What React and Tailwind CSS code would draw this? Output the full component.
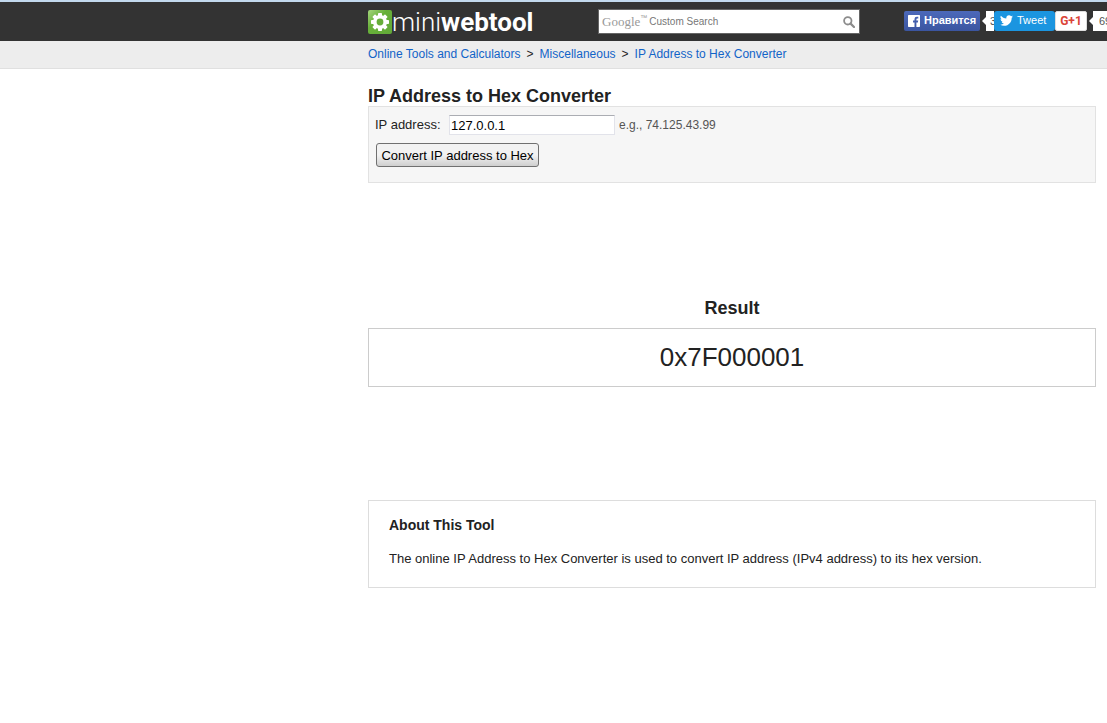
function GearLogo() {
  return (
    <svg viewBox="0 0 24 24" className="h-6 w-6 shrink-0" aria-hidden="true">
      <defs>
        <linearGradient id="leaf" x1="0" y1="0" x2="1" y2="1">
          <stop offset="0" stopColor="#a5d67d" />
          <stop offset="0.4" stopColor="#68b03a" />
          <stop offset="1" stopColor="#62a938" />
        </linearGradient>
      </defs>
      <rect width="24" height="24" rx="2" fill="url(#leaf)" />
      <g fill="#fff">
        <circle cx="12" cy="12" r="7" />
        {[0, 45, 90, 135].map((a) => (
          <rect key={a} x="10" y="3" width="4" height="18" rx="0.8" transform={`rotate(${a} 12 12)`} />
        ))}
      </g>
      <circle cx="12" cy="12" r="3.4" fill="#66ae3a" />
    </svg>
  );
}

function SearchBox() {
  return (
    <form className="relative ml-[66px] h-[25px] w-[262px] shrink-0 border border-[#666] bg-white" onSubmit={(e) => e.preventDefault()}>
      <input type="text" aria-label="Google Custom Search" className="h-full w-full bg-transparent px-1 text-[13px] outline-none" />
      <span className="pointer-events-none absolute inset-y-0 left-[3px] flex items-center text-[#999]">
        <span className="font-['Liberation_Serif',serif] text-[13px] leading-4">Google</span>
        <span className="mb-2 text-[7px] leading-none">™</span>
        <span className="ml-[2px] text-[10px] leading-4 text-[#777]">Custom Search</span>
      </span>
      <button type="submit" aria-label="Search" className="absolute inset-y-0 right-1 flex items-center">
        <svg viewBox="0 0 12 12" className="h-3 w-3" fill="none" stroke="#8c8c8c">
          <circle cx="4.800" cy="4.800" r="3.700" strokeWidth="1.800" />
          <path d="M7.600 7.600 11 11" strokeWidth="2.200" strokeLinecap="round" />
        </svg>
      </button>
    </form>
  );
}

function Arrow() {
  return (
    <svg viewBox="0 0 4 8" className="h-2 w-1 shrink-0" aria-hidden="true">
      <path d="M4 0v8L0 4z" fill="#fff" />
    </svg>
  );
}

function Social() {
  return (
    <div className="ml-11 flex h-[37px] shrink-0 items-center self-start">
      <button className="flex h-5 w-[76px] items-center gap-1 rounded-[2px] bg-linear-to-b from-[#4c69ba] to-[#3b55a0] pl-1 text-[11px] font-bold text-white">
        <svg viewBox="0 0 12 12" className="h-3 w-3 shrink-0" aria-hidden="true">
          <path fill="#fff" d="M.7 0h10.6q.7 0 .7.7v10.6q0 .7-.7.7H8.4V7.4h1.5l.3-1.9H8.4V4.4q0-.9.9-.9h1V1.8H8.8Q6.500 1.800 6.500 4v1.500H5v1.900h1.500V12H.7Q0 12 0 11.300V.7Q0 0 .7 0z" />
        </svg>
        Нравится
      </button>
      <span className="flex w-[14px] items-center overflow-hidden pl-[2px]">
        <Arrow />
        <span className="h-5 w-10 shrink-0 bg-white pl-1 text-[11px] leading-5 text-[#555]">3</span>
      </span>
      <button className="flex h-5 w-[61px] items-center gap-1 rounded-[3px] bg-[#1b95e0] pl-[6px] text-[11px] text-white">
        <svg viewBox="0 0 24 24" className="h-[13px] w-[13px] shrink-0" aria-hidden="true">
          <path fill="#fff" d="M23.950 4.570a10 10 0 0 1-2.820.770 4.960 4.960 0 0 0 2.160-2.720 9.900 9.900 0 0 1-3.120 1.190 4.920 4.920 0 0 0-8.390 4.480C7.690 8.090 4.070 6.130 1.640 3.160a4.920 4.920 0 0 0 1.520 6.570 4.900 4.900 0 0 1-2.230-.610v.060a4.920 4.920 0 0 0 3.950 4.820 5 5 0 0 1-2.210.090 4.940 4.940 0 0 0 4.600 3.420A9.870 9.870 0 0 1 0 19.540a13.990 13.990 0 0 0 7.550 2.210c9.050 0 14-7.500 14-13.980 0-.210 0-.420-.020-.630a9.940 9.940 0 0 0 2.460-2.550z" />
        </svg>
        Tweet
      </button>
      <button className="h-5 w-8 rounded-[2px] border border-[#ddd] bg-white text-center font-['Roboto',sans-serif] text-[12px] leading-[18px] font-bold text-[#db4437]">
        G+1
      </button>
      <span className="flex items-center pl-[2px]">
        <Arrow />
        <span className="h-5 w-10 shrink-0 bg-white pl-[6px] text-[11px] leading-5 text-[#555]">69</span>
      </span>
    </div>
  );
}

export default function App() {
  return (
    <div className="min-h-screen overflow-hidden bg-white font-['Liberation_Sans',Arial,sans-serif] text-[13px] text-[#222]">
      <header className="border-t-2 border-[#c3d9ee] bg-[#333]">
        <div className="ml-auto flex h-[39px] w-[739px] items-center">
          <a href="#" className="flex w-[164px] shrink-0 items-center font-['Roboto',sans-serif] text-[26px] leading-7 text-white" aria-label="miniwebtool">
            <GearLogo />
            <span className="font-light">mini</span>
            <span className="font-bold">webtool</span>
          </a>
          <SearchBox />
          <Social />
        </div>
      </header>
      <nav className="border-b border-[#e0e0e0] bg-[#ededed]" aria-label="Breadcrumb">
        <div className="ml-auto flex h-[27px] w-[739px] gap-[6px] text-[12px] leading-[26px]">
          <a href="#" className="text-[#1264c8]">Online Tools and Calculators</a>
          <span>&gt;</span>
          <a href="#" className="text-[#1264c8]">Miscellaneous</a>
          <span>&gt;</span>
          <a href="#" className="text-[#1264c8]">IP Address to Hex Converter</a>
        </div>
      </nav>
      <main className="mr-[11px] ml-auto w-[728px] pt-[17px]">
        <h1 className="text-[18px] leading-5 font-bold">IP Address to Hex Converter</h1>
        <form className="h-[77px] border border-[#e2e2e2] bg-[#f6f6f6] px-[6px] pt-[7px]" onSubmit={(e) => e.preventDefault()}>
          <div className="flex items-center">
            <label htmlFor="ip" className="w-[74px] leading-[22px]">IP address:</label>
            <input id="ip" type="text" defaultValue="127.0.0.1" className="h-5 w-[166px] border border-[#e2e3ea] border-t-[#abadb3] bg-white px-[1px] text-[13px] text-black" />
            <span className="ml-1 text-[12px] leading-[22px] text-[#555]">e.g., 74.125.43.99</span>
          </div>
          <button type="submit" className="mt-[7px] ml-px h-6 w-[163px] rounded-[3px] border border-[#707070] bg-linear-to-b from-[#f2f2f2] from-50% to-[#cfcfcf] pt-px text-[13px] whitespace-nowrap text-black">
            Convert IP address to Hex
          </button>
        </form>
        <section>
          <h2 className="mt-[114px] text-center text-[18px] leading-[22px] font-bold">Result</h2>
          <div className="mt-[9px] border border-[#ccc] text-center text-[26px] leading-[57px]">0x7F000001</div>
        </section>
        <section className="mt-[113px] h-[88px] border border-[#ddd] px-5 pt-4">
          <h2 className="text-[14px] leading-4 font-bold">About This Tool</h2>
          <p className="mt-[18px] leading-4">The online IP Address to Hex Converter is used to convert IP address (IPv4 address) to its hex version.</p>
        </section>
      </main>
    </div>
  );
}
